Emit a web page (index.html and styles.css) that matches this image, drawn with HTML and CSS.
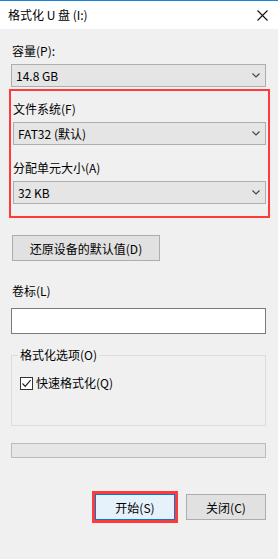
FILE: index.html
```html
<!DOCTYPE html>
<html lang="zh-CN">
<head>
<meta charset="utf-8" />
<title>格式化 U 盘 (I:)</title>
<link rel="stylesheet" href="styles.css">
</head>
<body>
<div class="window">
	<div class="titlebar">
		<span class="title">格式化 U 盘 (I:)</span>
		<svg class="close" width="11" height="11" viewBox="0 0 11 11">
			<path d="M0.5 0.5 L10.5 10.5 M10.5 0.5 L0.5 10.5" stroke="#111" stroke-width="1.1" fill="none"/>
		</svg>
	</div>

	<div class="content">
		<div class="lbl first">容量(P):</div>
		<div class="combo">
			<span>14.8 GB</span>
			<svg class="chev" width="8" height="5" viewBox="0 0 8 5"><path d="M0.5 0.5 L4 4 L7.5 0.5" stroke="#444" stroke-width="1.2" fill="none"/></svg>
		</div>

		<!-- highlighted part -->
		<div class="mark">
			<div class="lbl">文件系统(F)</div>
			<div class="combo">
				<span>FAT32 (默认)</span>
				<svg class="chev" width="8" height="5" viewBox="0 0 8 5"><path d="M0.5 0.5 L4 4 L7.5 0.5" stroke="#444" stroke-width="1.2" fill="none"/></svg>
			</div>
			<div class="lbl gap">分配单元大小(A)</div>
			<div class="combo">
				<span>32 KB</span>
				<svg class="chev" width="8" height="5" viewBox="0 0 8 5"><path d="M0.5 0.5 L4 4 L7.5 0.5" stroke="#444" stroke-width="1.2" fill="none"/></svg>
			</div>
		</div>

		<button class="btn restore">还原设备的默认值(D)</button>

		<div class="lbl volume">卷标(L)</div>
		<input class="field" type="text" value="" />

		<fieldset class="group">
			<legend>格式化选项(O)</legend>
			<label class="check">
				<span class="box">
					<svg width="11" height="11" viewBox="0 0 11 11"><path d="M1.5 5.5 L4.2 8.3 L9.6 2.2" stroke="#222" stroke-width="1.2" fill="none"/></svg>
				</span>
				快速格式化(Q)
			</label>
		</fieldset>

		<div class="progress"></div>

		<div class="actions">
			<button class="btn primary">开始(S)</button>
			<button class="btn">关闭(C)</button>
		</div>
	</div>
</div>
</body>
</html>
```

FILE: styles.css
```css
body {
	margin: 0;
	background: #f0f0f0;
	color: #000;
	font-family: "Noto Sans CJK SC", "Noto Sans", sans-serif;
	font-size: 12px;
}
.window {
	display: flex;
	flex-direction: column;
	height: 559px;
}
.titlebar {
	display: flex;
	align-items: center;
	justify-content: space-between;
	height: 28px;
	border-top: 1px solid #1883d7;
	background: #fff;
	padding: 0 10px 0 8px;
}
.title {
	line-height: 16px;
}
.close {
	margin-top: 1px;
}
.content {
	display: flex;
	flex-direction: column;
	padding: 0 12px 0 11px;
}
.lbl {
	line-height: 16px;
	padding-left: 1px;
}
.lbl.first {
	margin-top: 14px;
}
.lbl.gap {
	margin-top: 15px;
}
.lbl.volume {
	margin-top: 22px;
}
.combo {
	display: flex;
	align-items: center;
	justify-content: space-between;
	box-sizing: border-box;
	height: 23px;
	margin-top: 5px;
	padding: 0 5px 0 4px;
	background: #e5e5e5;
	border: 1px solid #adadad;
}
.chev {
	display: block;
}
.mark {
	display: flex;
	flex-direction: column;
	margin: 2px -4px 0 -2px;
	padding: 10px 2px 12px 2px;
	border: 2px solid #ff3a3a;
}
.mark .lbl {
	padding-left: 0;
}
.btn {
	box-sizing: border-box;
	height: 26px;
	font: inherit;
	color: #000;
	background: #e1e1e1;
	border: 1px solid #adadad;
	padding: 0;
}
.restore {
	align-self: flex-start;
	width: 148px;
	margin: 17px 0 0 1px;
}
.field {
	box-sizing: border-box;
	height: 26px;
	margin: 9px 0 0 0;
	background: #fff;
	border: 1px solid #7a7a7a;
	outline: none;
}
.group {
	margin: 13px 0 0 0;
	padding: 0 8px 34px 8px;
	min-width: 0;
	border: 1px solid #dcdcdc;
}
.group legend {
	margin-left: -2px;
	padding: 0 2px;
	line-height: 16px;
}
.check {
	display: flex;
	align-items: center;
	gap: 3px;
	margin-top: 12px;
	line-height: 16px;
}
.box {
	display: flex;
	align-items: center;
	justify-content: center;
	box-sizing: border-box;
	width: 13px;
	height: 13px;
	background: #fff;
	border: 1px solid #333;
}
.progress {
	box-sizing: border-box;
	height: 15px;
	margin-top: 17px;
	background: #e6e6e6;
	border: 1px solid #bcbcbc;
}
.actions {
	display: flex;
	justify-content: flex-end;
	gap: 11px;
	margin-top: 36px;
}
.actions .btn {
	width: 80px;
}
.primary {
	background: #e5f1fb;
	border-color: #0078d7;
	outline: 3px solid #ff3a3a;
}
```
